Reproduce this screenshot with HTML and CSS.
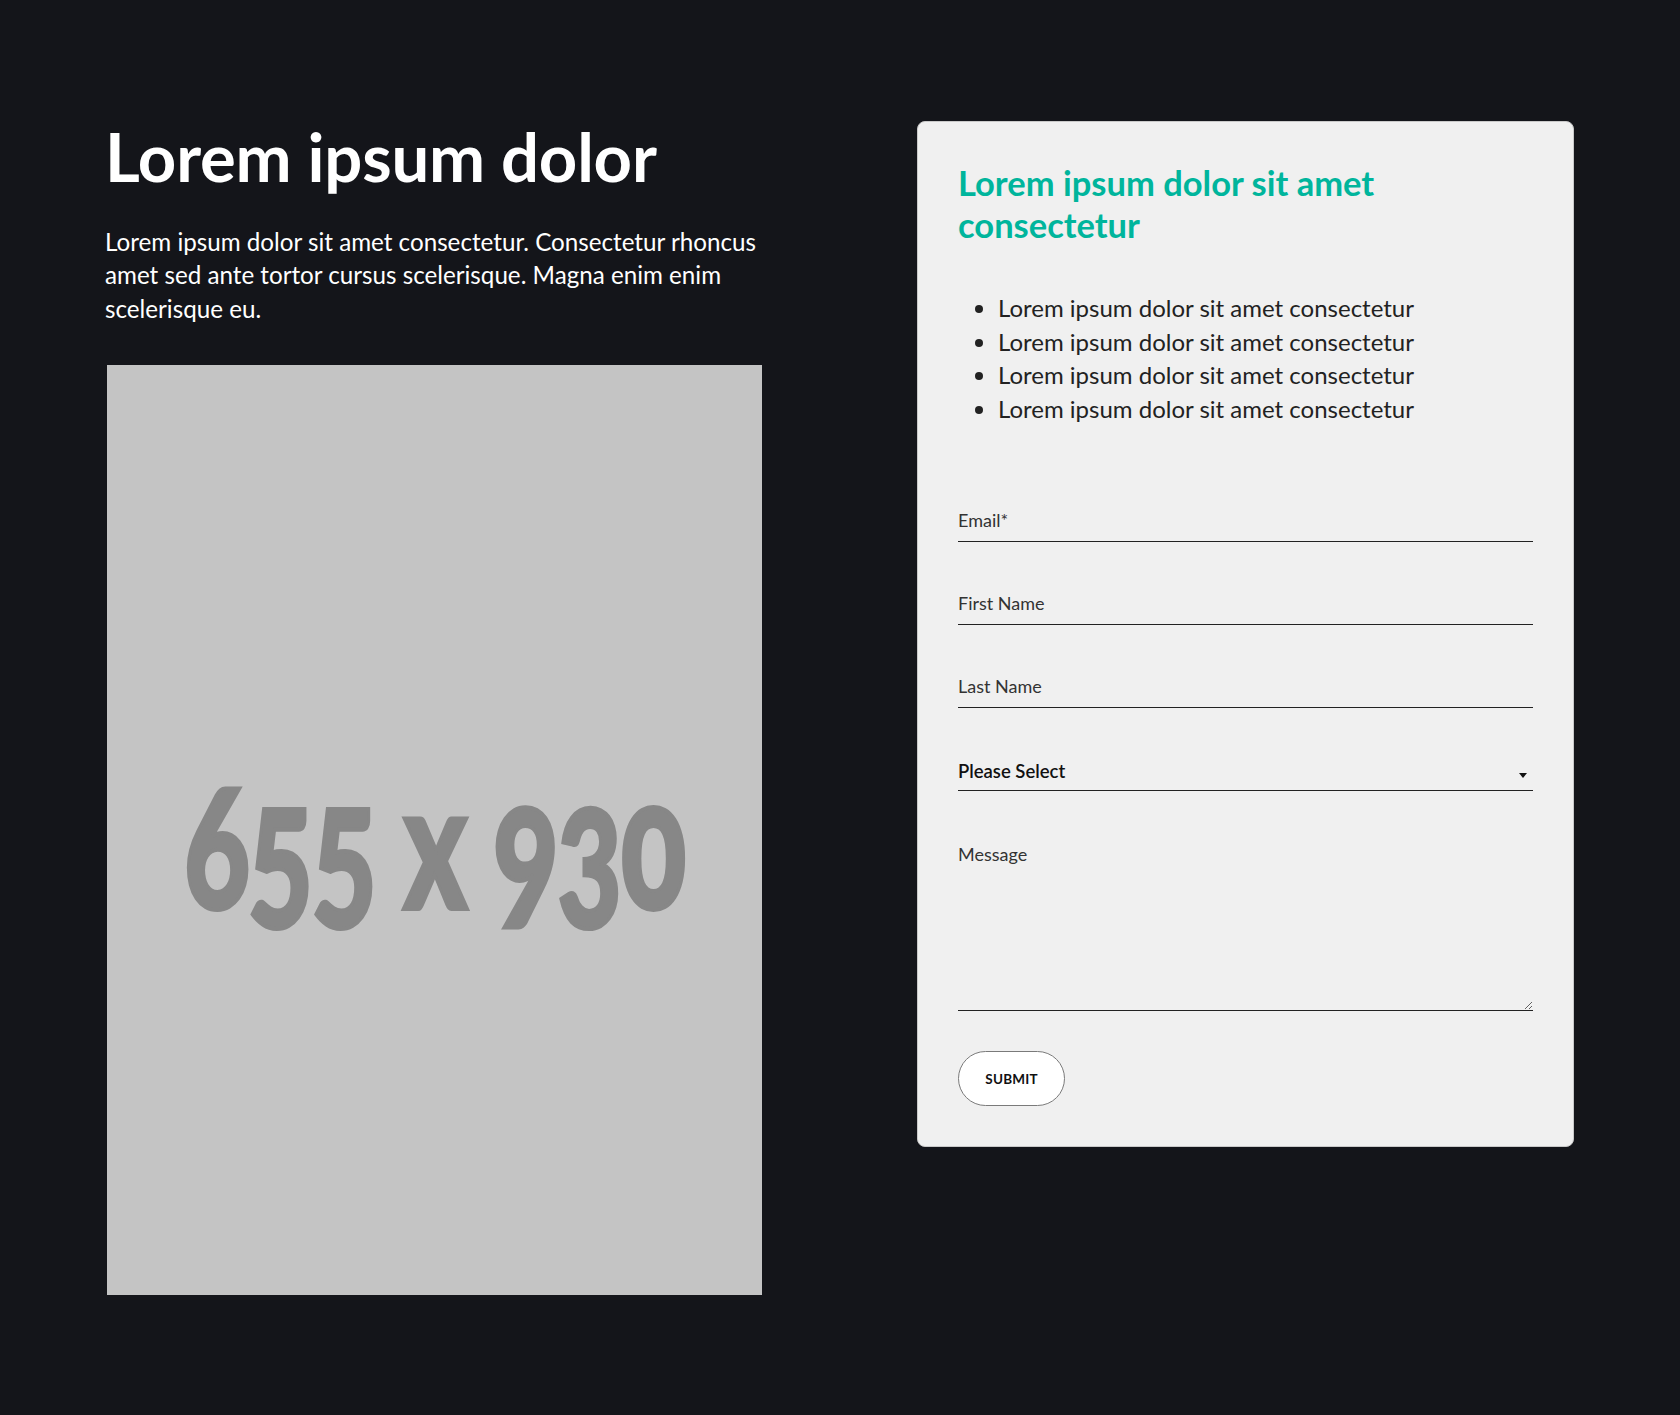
FILE: index.html
```html
<!DOCTYPE html>
<html lang="en">
<head>
<meta charset="utf-8">
<title>Lorem ipsum dolor</title>
<link rel="stylesheet" href="styles.css">
</head>
<body>
<main class="section">
  <div class="intro">
    <h1 class="intro-title">Lorem ipsum dolor</h1>
    <p class="intro-text">Lorem ipsum dolor sit amet consectetur. Consectetur rhoncus amet sed ante tortor cursus scelerisque. Magna enim enim scelerisque eu.</p>
    <div class="placeholder"><span class="placeholder-label">655 x 930</span></div>
  </div>
  <div class="card">
    <h2 class="card-title">Lorem ipsum dolor sit amet consectetur</h2>
    <ul class="card-list">
      <li>Lorem ipsum dolor sit amet consectetur</li>
      <li>Lorem ipsum dolor sit amet consectetur</li>
      <li>Lorem ipsum dolor sit amet consectetur</li>
      <li>Lorem ipsum dolor sit amet consectetur</li>
    </ul>
    <form class="form">
      <input class="field" type="email" placeholder="Email*">
      <input class="field" type="text" placeholder="First Name">
      <input class="field" type="text" placeholder="Last Name">
      <div class="select-wrap">
        <select class="field select">
          <option>Please Select</option>
        </select>
      </div>
      <textarea class="field message" placeholder="Message"></textarea>
      <button class="submit" type="button">SUBMIT</button>
    </form>
  </div>
</main>
</body>
</html>
```

FILE: styles.css
```css
* { box-sizing: border-box; }

html, body {
  margin: 0;
  padding: 0;
  background: #14151a;
}

body {
  font-family: "Lato", "Liberation Sans", sans-serif;
  color: #ffffff;
}

.section {
  display: grid;
  grid-template-columns: 657px 657px;
  column-gap: 155px;
  padding: 121px 106px 121px 105px;
  align-items: start;
}

.intro-title {
  margin: 0;
  font-size: 67px;
  line-height: 70px;
  font-weight: 700;
  letter-spacing: -0.2px;
}

.intro-text {
  margin: 34px 0 0;
  font-size: 24.2px;
  line-height: 33.3px;
  font-weight: 400;
}

.placeholder {
  margin: 40px 0 0 2px;
  width: 655px;
  height: 930px;
  background: #c4c4c4;
  display: flex;
  align-items: center;
  justify-content: center;
  overflow: hidden;
}

.placeholder-label {
  display: inline-block;
  font-family: "Lato", "Open Sans", sans-serif;
  font-weight: 900;
  font-size: 175px;
  color: #878787;
  -webkit-text-stroke: 4px #878787;
  font-variant-numeric: oldstyle-nums;
  transform: scaleX(0.69);
  white-space: nowrap;
  letter-spacing: -2px;
  margin-top: 22px;
}

.card {
  background: #f0f0f0;
  border: 1px solid #c9c9c9;
  border-radius: 8px;
  padding: 40px;
  color: #222;
}

.card-title {
  margin: 0;
  font-size: 34.5px;
  line-height: 42px;
  font-weight: 700;
  color: #00b59c;
}

.card-list {
  margin: 45px 0 0;
  padding: 0 0 0 40px;
  font-size: 24px;
  line-height: 33.5px;
  color: #222;
}

.form {
  display: flex;
  flex-direction: column;
  margin-top: 79px;
}

.field {
  display: block;
  width: 100%;
  height: 38px;
  margin: 0 0 45px;
  padding: 0 0 6px;
  border: 0;
  border-bottom: 1px solid #222;
  border-radius: 0;
  background: transparent;
  font-family: "Lato", "Liberation Sans", sans-serif;
  font-size: 18px;
  color: #222;
  outline: none;
}

.field::placeholder {
  color: #333;
  opacity: 1;
}

.select-wrap {
  position: relative;
}

.select {
  -webkit-appearance: none;
  appearance: none;
  padding: 0 0 2px;
  font-size: 18.5px;
  color: #111;
  font-weight: 600;
}

.select-wrap::after {
  content: "";
  position: absolute;
  right: 6px;
  top: 20px;
  border-left: 4.5px solid transparent;
  border-right: 4.5px solid transparent;
  border-top: 5px solid #111;
}

.message {
  height: 175px;
  margin: 0;
  padding: 7px 0 0;
  resize: vertical;
}

.submit {
  align-self: flex-start;
  margin-top: 40px;
  width: 107px;
  height: 55px;
  background: #ffffff;
  border: 1px solid #7a7a7a;
  border-radius: 28px;
  font-family: "Lato", "Liberation Sans", sans-serif;
  font-weight: 700;
  font-size: 13.5px;
  color: #111;
  letter-spacing: 0.2px;
  cursor: pointer;
}
```
